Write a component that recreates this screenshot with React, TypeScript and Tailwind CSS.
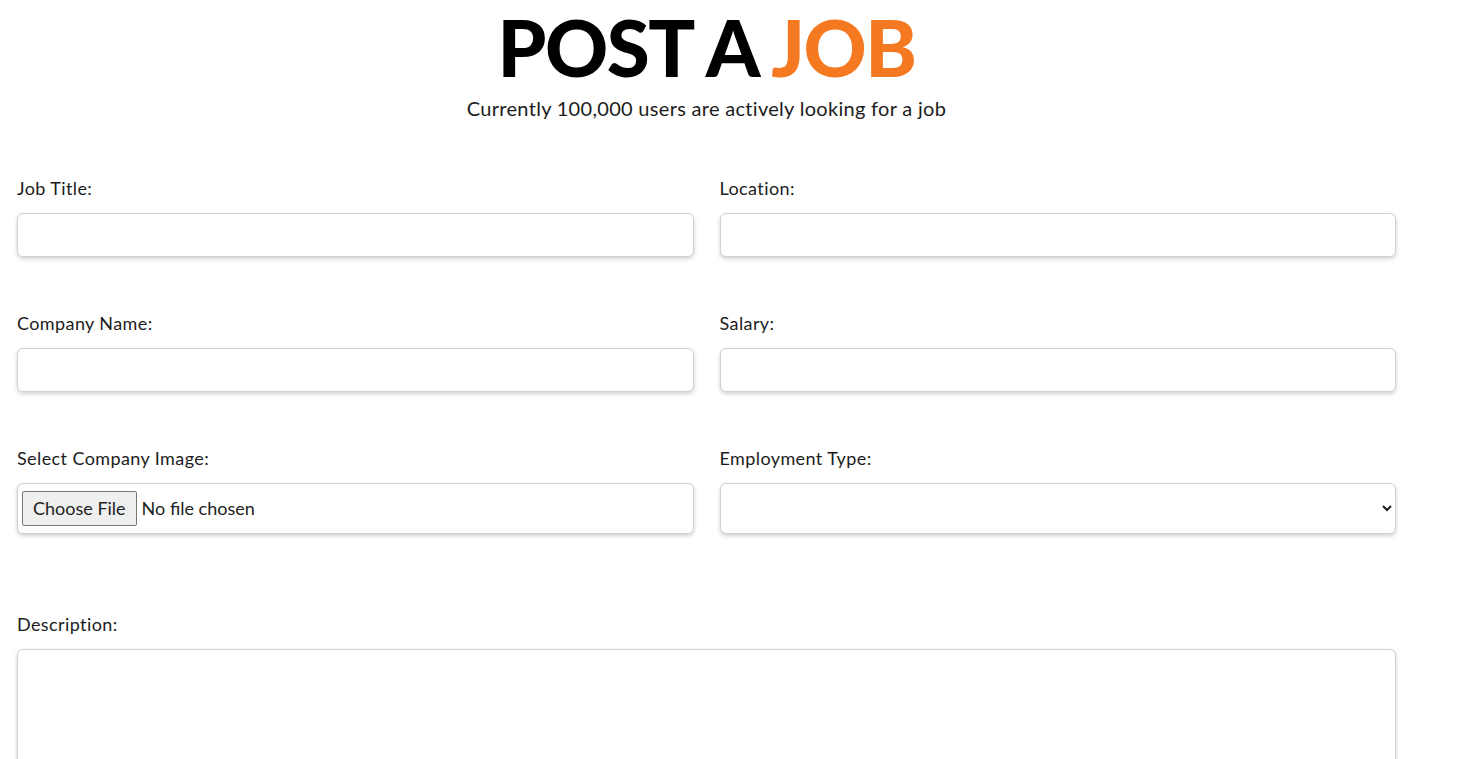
import { useState } from "react";

const rows = [
  { left: "Job Title:", right: "Location:" },
  { left: "Company Name:", right: "Salary:" },
];

const labelClass = "block text-[18px] leading-[24px] tracking-[0.4px] mb-[13px]";

const inputClass =
  "w-full h-[44px] rounded-md border border-[#d0d0d0] bg-white px-3 text-[17px] shadow-[0_2px_4px_rgba(0,0,0,0.18)] outline-none";

export default function App() {
  const [type, setType] = useState("");

  return (
    <div className="min-h-screen bg-white font-['Lato',sans-serif] text-[#1c1c1c]">
      <div className="w-[1379px] ml-[17px]">
        {/* Header */}
        <div className="flex flex-col items-center">
          <h1 className="text-[78px] leading-[94px] font-black tracking-[-1.5px] text-black">
            POST A <span className="text-[#f47920]">JOB</span>
          </h1>
          <p className="mt-[1px] text-[20px] leading-[26px] tracking-[0.3px]">
            Currently 100,000 users are actively looking for a job
          </p>
        </div>

        <form className="mt-[55px]">
          {rows.map((row) => (
            <div key={row.left} className="grid grid-cols-2 gap-[26px] mb-[54px]">
              <div>
                <label className={labelClass}>{row.left}</label>
                <input type="text" className={inputClass} />
              </div>
              <div>
                <label className={labelClass}>{row.right}</label>
                <input type="text" className={inputClass} />
              </div>
            </div>
          ))}

          <div className="grid grid-cols-2 gap-[26px]">
            <div>
              <label className={labelClass}>Select Company Image:</label>
              <div className="h-[51px] rounded-md border border-[#d0d0d0] bg-white shadow-[0_2px_4px_rgba(0,0,0,0.18)] flex items-center px-[4px]">
                <input
                  type="file"
                  className="text-[18px] text-[#222] file:mr-[5px] file:h-[35px] file:px-[10px] file:border file:border-[#767676] file:bg-[#efefef] file:rounded-[2px] file:text-[18px] file:text-[#222]"
                />
              </div>
            </div>
            <div>
              <label className={labelClass}>Employment Type:</label>
              <select
                value={type}
                onChange={(e) => setType(e.target.value)}
                className="w-full h-[51px] rounded-md border border-[#d0d0d0] bg-white pl-3 pr-[6px] text-[17px] shadow-[0_2px_4px_rgba(0,0,0,0.18)] outline-none"
              >
                <option value=""></option>
                <option value="full">Full Time</option>
                <option value="part">Part Time</option>
                <option value="contract">Contract</option>
              </select>
            </div>
          </div>

          <div className="mt-[78px]">
            <label className={labelClass}>Description:</label>
            <textarea className="block w-full h-[200px] rounded-md border border-[#d0d0d0] bg-white p-3 text-[17px] shadow-[0_2px_4px_rgba(0,0,0,0.18)] outline-none resize-none" />
          </div>
        </form>
      </div>
    </div>
  );
}
